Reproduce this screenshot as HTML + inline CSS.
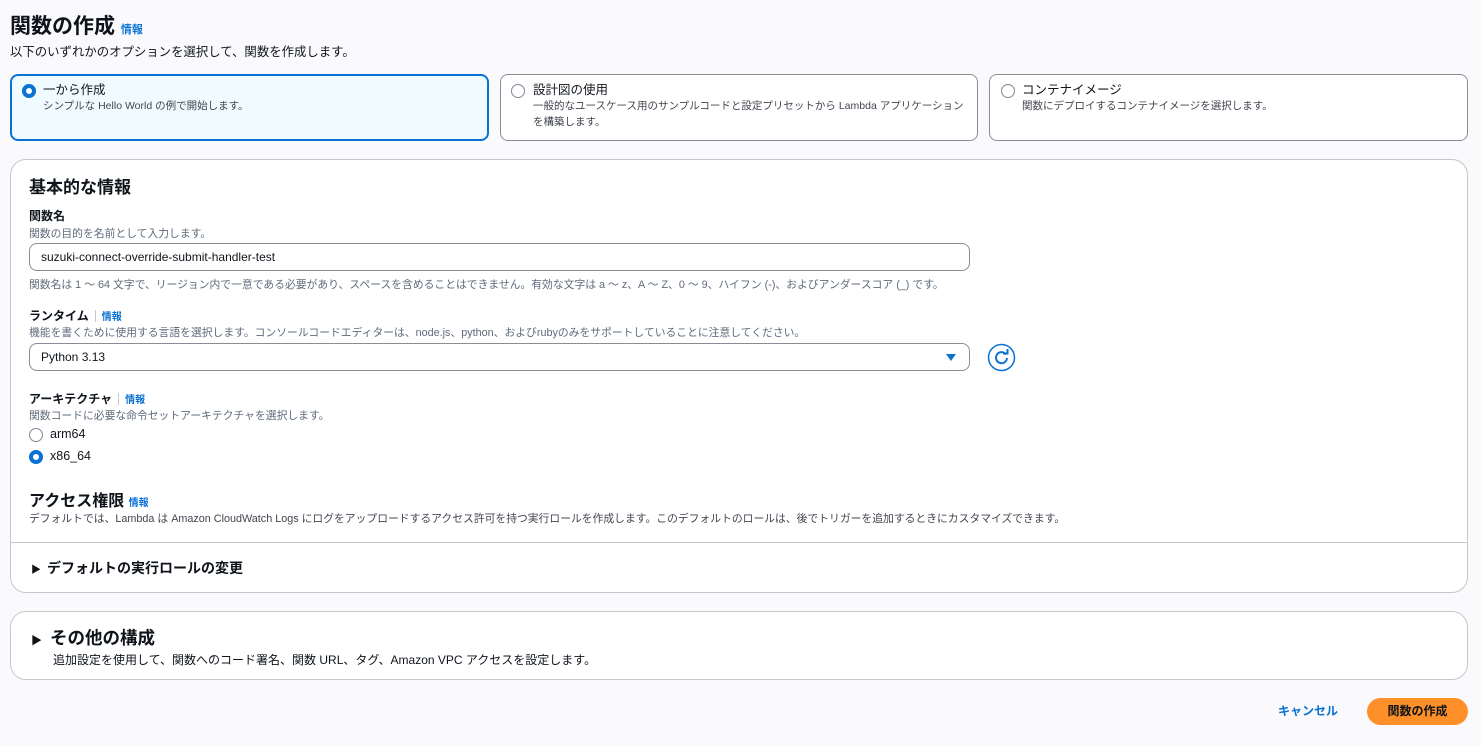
<!DOCTYPE html>
<html><head><meta charset="utf-8"><style>
*{box-sizing:border-box;margin:0;padding:0}
body{width:1481px;height:746px;background:#fafafc;font-family:"Liberation Sans","Noto Sans CJK JP",sans-serif;color:#0f141a;position:relative;overflow:hidden}
.a{position:absolute;white-space:nowrap}
.info{color:#0972d3;font-weight:bold;font-size:10px}
.card{position:absolute;top:74px;height:67px;border:1px solid #8c8c94;border-radius:8px;background:#fff}
.card.sel{border:2px solid #0972d3;background:#f0fbff}
.rad{position:absolute;width:14px;height:14px;border-radius:50%;border:1.5px solid #7d8998;background:#fff}
.rad.on{border:4px solid #0972d3}
.t1{font-size:12.5px;color:#0f141a;line-height:16px}
.t2{font-size:10.5px;color:#424650;line-height:16px}
.lbl{font-size:12px;font-weight:bold}
.desc{font-size:10.8px;color:#5f6b7a}
.sep{display:inline-block;width:1px;height:12px;background:#c6c6cd;margin:0 6px;vertical-align:-2px}
.panel{position:absolute;left:10px;width:1458px;background:#fff;border:1px solid #c6c6cd;border-radius:16px}
.box{position:absolute;left:29px;width:941px;height:28px;border:1px solid #8c8c94;border-radius:8px;background:#fff;font-size:12px;padding-left:11px;line-height:26px}
</style></head><body>
<div class="a" style="left:10px;top:10px;font-size:21px;font-weight:bold">関数の作成 <span class="info" style="font-size:11px">情報</span></div>
<div class="a" style="left:10px;top:42px;font-size:12.4px;color:#0f141a">以下のいずれかのオプションを選択して、関数を作成します。</div>

<div class="card sel" style="left:10px;width:479px"></div>
<div class="rad on" style="left:22px;top:84px"></div>
<div class="a t1" style="left:43px;top:82px">一から作成</div>
<div class="a t2" style="left:43px;top:98px">シンプルな Hello World の例で開始します。</div>

<div class="card" style="left:500px;width:478px"></div>
<div class="rad" style="left:511px;top:84px"></div>
<div class="a t1" style="left:533px;top:82px">設計図の使用</div>
<div class="a t2" style="left:533px;top:98px">一般的なユースケース用のサンプルコードと設定プリセットから Lambda アプリケーション<br>を構築します。</div>

<div class="card" style="left:989px;width:479px"></div>
<div class="rad" style="left:1001px;top:84px"></div>
<div class="a t1" style="left:1022px;top:82px">コンテナイメージ</div>
<div class="a t2" style="left:1022px;top:98px">関数にデプロイするコンテナイメージを選択します。</div>

<div class="panel" style="top:159px;height:434px"></div>
<div class="a" style="left:29px;top:173px;font-size:17px;font-weight:bold">基本的な情報</div>
<div class="a lbl" style="left:29px;top:207px">関数名</div>
<div class="a desc" style="left:29px;top:225px">関数の目的を名前として入力します。</div>
<div class="box" style="top:243px">suzuki-connect-override-submit-handler-test</div>
<div class="a desc" style="left:29px;top:276px">関数名は 1 ～ 64 文字で、リージョン内で一意である必要があり、スペースを含めることはできません。有効な文字は a ～ z、A ～ Z、0 ～ 9、ハイフン (-)、およびアンダースコア (_) です。</div>

<div class="a lbl" style="left:29px;top:307px">ランタイム<span class="sep"></span><span class="info">情報</span></div>
<div class="a desc" style="left:29px;top:324px">機能を書くために使用する言語を選択します。コンソールコードエディターは、node.js、python、およびrubyのみをサポートしていることに注意してください。</div>
<div class="box" style="top:343px">Python 3.13</div>
<svg class="a" style="left:945px;top:352px" width="12" height="10"><path d="M1 2h10L6 9z" fill="#0972d3"/></svg>
<svg class="a" style="left:987px;top:343px" width="29" height="29" viewBox="0 0 29 29"><circle cx="14.5" cy="14.5" r="13" fill="#fff" stroke="#0972d3" stroke-width="1.5"/><path d="M19 11.5A5.5 5.5 0 1 0 20 15" fill="none" stroke="#0972d3" stroke-width="2"/><path d="M16 10.5h4.5V6" fill="none" stroke="#0972d3" stroke-width="2"/></svg>

<div class="a lbl" style="left:29px;top:390px">アーキテクチャ<span class="sep"></span><span class="info">情報</span></div>
<div class="a desc" style="left:29px;top:407px">関数コードに必要な命令セットアーキテクチャを選択します。</div>
<div class="rad" style="left:29px;top:428px"></div>
<div class="a" style="left:50px;top:427px;font-size:12.5px">arm64</div>
<div class="rad on" style="left:29px;top:450px"></div>
<div class="a" style="left:50px;top:449px;font-size:12.5px">x86_64</div>

<div class="a" style="left:29px;top:487px;font-size:16px;font-weight:bold">アクセス権限 <span class="info">情報</span></div>
<div class="a desc" style="left:29px;top:510px;color:#424650">デフォルトでは、Lambda は Amazon CloudWatch Logs にログをアップロードするアクセス許可を持つ実行ロールを作成します。このデフォルトのロールは、後でトリガーを追加するときにカスタマイズできます。</div>
<div class="a" style="left:11px;top:542px;width:1456px;height:1px;background:#c6c6cd"></div>
<div class="a" style="left:31px;top:558px;font-size:14px;font-weight:bold"><span style="font-size:10px;margin-right:6px">▶</span>デフォルトの実行ロールの変更</div>

<div class="panel" style="top:611px;height:69px"></div>
<div class="a" style="left:31px;top:625px;font-size:17.5px;font-weight:bold"><span style="font-size:11px;margin-right:8px">▶</span>その他の構成</div>
<div class="a" style="left:53px;top:651px;font-size:12px;color:#0f141a">追加設定を使用して、関数へのコード署名、関数 URL、タグ、Amazon VPC アクセスを設定します。</div>

<div class="a" style="left:1278px;top:702px;font-size:12px;font-weight:bold;color:#0972d3">キャンセル</div>
<div class="a" style="left:1367px;top:698px;width:101px;height:27px;background:#ff9029;border-radius:14px;font-size:12px;font-weight:bold;text-align:center;line-height:27px">関数の作成</div>
</body></html>
